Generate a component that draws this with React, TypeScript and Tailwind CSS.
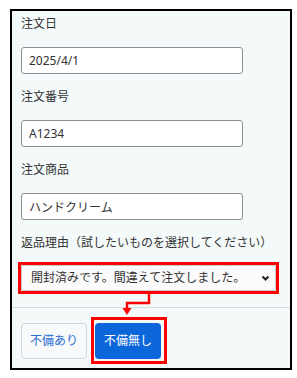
import React from "react";

const fields = [
  { label: "注文日", value: "2025/4/1" },
  { label: "注文番号", value: "A1234" },
  { label: "注文商品", value: "ハンドクリーム" },
];

export default function App() {
  return (
    <div className="min-h-screen bg-white pt-[9px] pl-[10px] font-['Noto_Sans','Noto_Sans_CJK_JP',sans-serif] text-[12px] text-[#333]">
      <div className="relative w-[282px] h-[361px] border-2 border-black bg-[#f4f9fa] flex flex-col">
        {/* Form body */}
        <div className="px-[9px] pt-[3px] flex flex-col">
          {fields.map((f) => (
            <div key={f.label} className="mb-[13px]">
              <div className="h-5 leading-5 mb-[13px]">{f.label}</div>
              <input
                readOnly
                value={f.value}
                className="w-[222px] h-[27px] rounded-[3px] border border-[#8c8f93] bg-white px-[7px] text-[12px] text-[#333] outline-none"
              />
            </div>
          ))}
          <div className="h-5 leading-5 mb-[12px]">
            返品理由（試したいものを選択してください）
          </div>
          <div className="relative w-[255px] h-[26px]">
            <select
              defaultValue="a"
              className="w-full h-full appearance-none rounded-[2px] border border-[#c5c8cc] bg-[#fbfbfb] pl-[9px] pr-6 text-[12px] text-[#333] outline-none"
            >
              <option value="a">開封済みです。間違えて注文しました。</option>
            </select>
            <svg
              className="absolute right-[6px] top-[10px] pointer-events-none"
              width="9"
              height="6"
              viewBox="0 0 9 6"
            >
              <polyline
                points="1.5,1.5 4.5,4.5 7.5,1.5"
                fill="none"
                stroke="#222"
                strokeWidth="2"
              />
            </svg>
            <span className="absolute -inset-[3px] border-[3px] border-[#f00] pointer-events-none" />
          </div>
        </div>

        {/* Footer */}
        <div className="mt-[16px] border-t border-[#d9dcdf] px-[9px] pt-[15px] flex items-center gap-[8px]">
          <button className="w-[66px] h-[36px] rounded-[4px] border border-[#d4d7da] bg-[#f7f9fa] text-[12px] text-[#2d6fd3]">
            不備あり
          </button>
          <div className="relative">
            <button className="w-[66px] h-[36px] rounded-[4px] bg-[#0b66da] text-[12px] text-white">
              不備無し
            </button>
            <span className="absolute -left-[4px] -top-[6px] -right-[6px] -bottom-[5px] border-[3px] border-[#f00] pointer-events-none" />
          </div>
        </div>

        {/* Annotation arrow */}
        <svg
          className="absolute left-0 top-0 pointer-events-none"
          width="278"
          height="357"
          viewBox="0 0 278 357"
        >
          <polyline
            points="137,282 137,292 115,292 115,298"
            fill="none"
            stroke="#f00"
            strokeWidth="2.5"
          />
          <polygon points="110.5,297 119.5,297 115,304" fill="#f00" />
        </svg>
      </div>
    </div>
  );
}
